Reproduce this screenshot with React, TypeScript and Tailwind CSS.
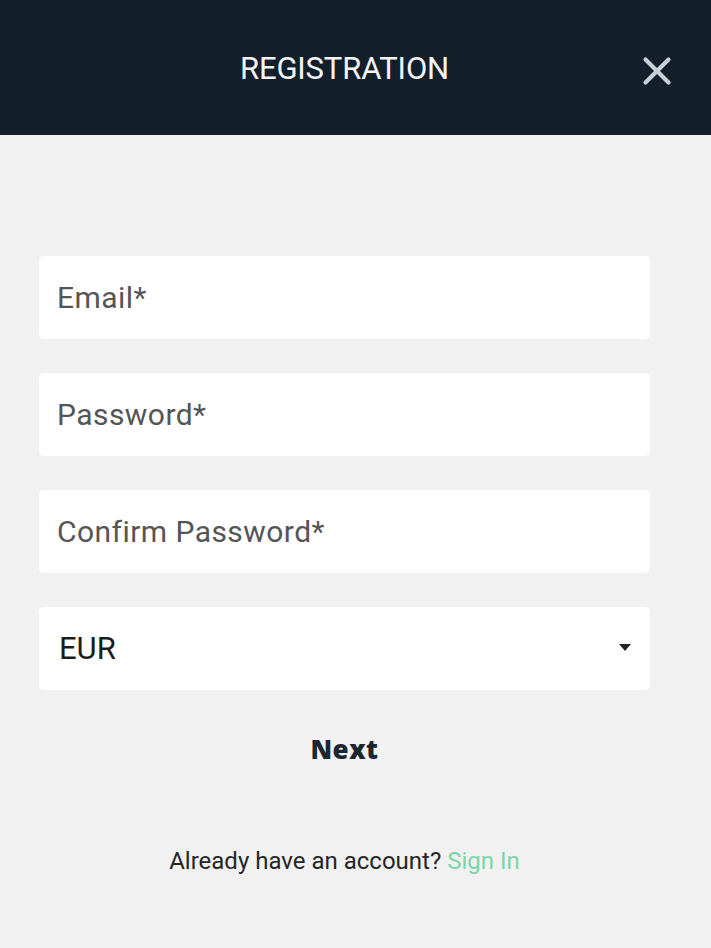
import { X } from "lucide-react"

const fields = ["Email*", "Password*", "Confirm Password*"]

export default function App() {
    return (
        <div className="min-h-screen bg-[#f1f1f1] font-['Roboto',sans-serif]">
            {/* Header */}
            <header className="h-[135px] bg-[#131f2b] flex items-center justify-center relative">
                <h1 className="text-[31px] text-[#f2f4f6] tracking-[-0.005em] mt-[3px] mr-[22px]">REGISTRATION</h1>
                <button className="absolute right-[31px] top-[48px] text-[#c9cfd6]">
                    <X size={46} strokeWidth={2.2} />
                </button>
            </header>

            {/* Form */}
            <div className="px-[39px] pr-[61px] pt-[121px] flex flex-col gap-[34px]">
                {fields.map((f) => (
                    <div key={f} className="h-[83px] bg-white rounded-[5px] flex items-center px-[18px]">
                        <span className="text-[30px] tracking-[0.015em] text-[#555]">{f}</span>
                    </div>
                ))}
                <div className="h-[83px] bg-white rounded-[5px] flex items-center justify-between pl-[20px] pr-[19px]">
                    <span className="text-[31px] text-[#1c1c1c] mt-[2px]">EUR</span>
                    <svg width="12" height="7" viewBox="0 0 12 7" className="mb-[2px]">
                        <path d="M0 0h12L6 7z" fill="#222" />
                    </svg>
                </div>
            </div>

            <div className="flex justify-center mt-[40px]">
                <button className="text-[26px] font-extrabold tracking-[0.02em] text-[#1c2630] font-['Open_Sans',sans-serif] mr-[22px]">Next</button>
            </div>

            <p className="text-center text-[24px] text-[#252525] mt-[74px] mr-[22px]">
                Already have an account? <a className="text-[#7ad6a6]">Sign In</a>
            </p>
        </div>
    )
}
